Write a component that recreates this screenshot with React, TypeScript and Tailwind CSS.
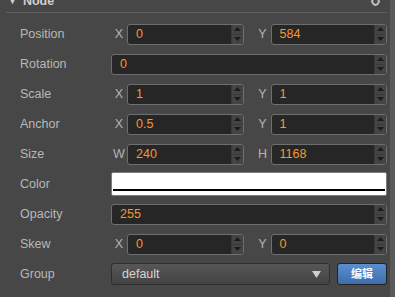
import React from "react";

const font = { fontFamily: '"Liberation Sans", Arial, "Noto Sans CJK SC", sans-serif' };

function Spinner() {
  return (
    <div className="flex w-[12px] flex-col border-l border-[#3a3a3a] bg-[#444]">
      <div className="flex flex-1 items-center justify-center border-b border-[#3a3a3a]">
        <svg width="7" height="4" viewBox="0 0 7 4">
          <path d="M3.5 0 L7 4 L0 4 Z" fill="#1c1c1c" />
        </svg>
      </div>
      <div className="flex flex-1 items-center justify-center">
        <svg width="7" height="4" viewBox="0 0 7 4">
          <path d="M0 0 L7 0 L3.5 4 Z" fill="#1c1c1c" />
        </svg>
      </div>
    </div>
  );
}

function NumInput({ value }: { value: string }) {
  return (
    <div className="flex h-[21px] flex-1 overflow-hidden rounded-[3px] border border-[#6e6e6e] bg-[#262626]">
      <div className="flex flex-1 items-center pl-[8px] text-[12.5px] text-[#f39a2b]">{value}</div>
      <Spinner />
    </div>
  );
}

function Pair({ axis, value }: { axis: string; value: string }) {
  return (
    <div className="flex flex-1 items-center">
      <span className="w-[16px] text-center text-[12.5px] text-[#b4b4b4]">{axis}</span>
      <NumInput value={value} />
    </div>
  );
}

function Row({ label, children }: { label: string; children: React.ReactNode }) {
  return (
    <div className="flex h-[30px] items-center">
      <div className="w-[111px] pl-[20px] text-[12.5px] text-[#b8b8b8]">{label}</div>
      <div className="flex flex-1 items-center gap-[11px]">{children}</div>
    </div>
  );
}

export default function App() {
  return (
    <div className="flex h-[297px] w-[395px] overflow-hidden bg-[#474747]" style={font}>
      <div className="flex w-[390px] flex-col pr-[3px]">
        {/* section header, scrolled partly out of view */}
        <div className="-mt-[9px] ml-[6px] flex h-[22px] items-center border-b border-[#5f5f5f] pr-[2px]">
          <span className="ml-[2px] text-[9px] text-[#cfcfcf]">▼</span>
          <span className="ml-[6px] text-[12.5px] font-bold text-[#cfcfcf]">Node</span>
          <svg className="ml-auto mr-[5px]" width="9" height="9" viewBox="0 0 9 9">
            <circle cx="4.5" cy="4.5" r="3.2" fill="none" stroke="#bdbdbd" strokeWidth="2" />
            <path d="M4.5 0 V2 M4.5 7 V9 M0 4.5 H2 M7 4.5 H9" stroke="#bdbdbd" strokeWidth="1.6" />
          </svg>
        </div>
        <div className="mt-[6px] flex flex-col">
          <Row label="Position">
            <Pair axis="X" value="0" />
            <Pair axis="Y" value="584" />
          </Row>
          <Row label="Rotation">
            <NumInput value="0" />
          </Row>
          <Row label="Scale">
            <Pair axis="X" value="1" />
            <Pair axis="Y" value="1" />
          </Row>
          <Row label="Anchor">
            <Pair axis="X" value="0.5" />
            <Pair axis="Y" value="1" />
          </Row>
          <Row label="Size">
            <Pair axis="W" value="240" />
            <Pair axis="H" value="1168" />
          </Row>
          <Row label="Color">
            <div className="flex h-[24px] flex-1 flex-col rounded-[2px] border border-[#7c7c7c] bg-white p-[1px]">
              <div className="flex-1 bg-white" />
              <div className="h-[2px] bg-black" />
              <div className="h-[3px] bg-white" />
            </div>
          </Row>
          <Row label="Opacity">
            <NumInput value="255" />
          </Row>
          <Row label="Skew">
            <Pair axis="X" value="0" />
            <Pair axis="Y" value="0" />
          </Row>
          <Row label="Group">
            <div className="flex flex-1 items-center gap-[7px]">
              <div className="flex h-[22px] flex-1 items-center rounded-[3px] border border-[#2e2e2e] bg-gradient-to-b from-[#575757] to-[#434343] pl-[10px] pr-[8px] text-[12.5px] text-[#d6d6d6]">
                <span>default</span>
                <svg className="ml-auto" width="9" height="7" viewBox="0 0 9 7">
                  <path d="M0 0 H9 L4.5 7 Z" fill="#cfcfcf" />
                </svg>
              </div>
              <div className="flex h-[22px] w-[50px] items-center justify-center rounded-[3px] border border-[#222] bg-gradient-to-b from-[#5b8fcf] to-[#3e6dab] text-[11px] font-bold text-white">
                编辑
              </div>
            </div>
          </Row>
        </div>
      </div>
      <div className="w-[5px] bg-[#5a5a5a]" />
    </div>
  );
}
